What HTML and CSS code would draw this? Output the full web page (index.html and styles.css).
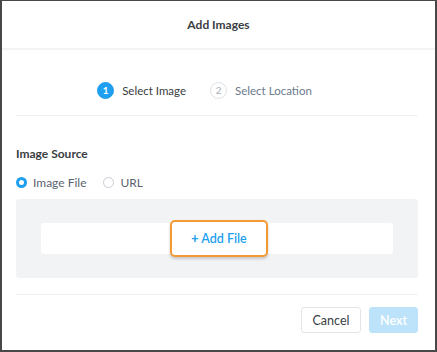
FILE: index.html
```html
<!DOCTYPE html>
<html lang="en">
<head>
    <meta charset="UTF-8">
    <title>Add Images</title>
    <link rel="stylesheet" href="styles.css">
</head>
<body>
    <div class="dialog">
        <div class="dialog-header">Add Images</div>
        <div class="dialog-body">
            <div class="steps">
                <div class="step active"><span class="step-num">1</span>Select Image</div>
                <div class="step"><span class="step-num">2</span>Select Location</div>
            </div>
            <div class="section-title">Image Source</div>
            <div class="radios">
                <label class="radio checked"><span class="radio-dot"></span>Image File</label>
                <label class="radio"><span class="radio-dot"></span>URL</label>
            </div>
            <div class="drop-area">
                <div class="drop-bar">
                    <button class="add-file"><span class="plus">+</span> Add File</button>
                </div>
            </div>
        </div>
        <div class="dialog-footer">
            <button class="btn">Cancel</button>
            <button class="btn btn-primary" disabled>Next</button>
        </div>
    </div>
</body>
</html>
```

FILE: styles.css
```css
body {
    margin: 0;
    font-family: Lato, "Open Sans", sans-serif;
    background: #fff;
}
.dialog {
    box-sizing: border-box;
    width: 437px;
    height: 352px;
    border: 2px solid #484848;
    border-top-width: 1px;
    background: #fff;
    display: flex;
    flex-direction: column;
}
.dialog-header {
    height: 47px;
    display: flex;
    align-items: center;
    justify-content: center;
    font-size: 12px;
    font-weight: 700;
    color: #3a3d42;
    border-bottom: 2px solid #f3f4f6;
}
.dialog-body {
    padding: 0 17px 0 14px;
}
.steps {
    display: flex;
    justify-content: center;
    gap: 24px;
    height: 66px;
    box-sizing: border-box;
    padding: 32px 25px 0 0;
    border-bottom: 1px solid #f0f1f3;
}
.step {
    display: flex;
    align-items: flex-start;
    font-size: 11.5px;
    color: #6b7a8d;
    line-height: 17px;
}
.step.active {
    color: #3a3d42;
}
.step-num {
    box-sizing: border-box;
    width: 17px;
    height: 17px;
    border-radius: 50%;
    border: 1px solid #dde1e6;
    color: #a4adb8;
    font-size: 10px;
    display: flex;
    align-items: center;
    justify-content: center;
    margin-right: 8px;
}
.step.active .step-num {
    background: #1e9ff0;
    border-color: #1e9ff0;
    color: #fff;
    font-weight: 700;
}
.section-title {
    margin-top: 30px;
    font-size: 12px;
    font-weight: 700;
    color: #3a3d42;
}
.radios {
    display: flex;
    gap: 17px;
    margin-top: 14px;
}
.radio {
    display: flex;
    align-items: center;
    font-size: 12px;
    color: #5b6470;
}
.radio-dot {
    box-sizing: border-box;
    width: 11px;
    height: 11px;
    border-radius: 50%;
    border: 1px solid #c8cdd3;
    margin-right: 6px;
}
.radio.checked .radio-dot {
    border: 3px solid #1e9ff0;
}
.drop-area {
    margin-top: 9px;
    background: #f2f3f5;
    border-radius: 3px;
    height: 79px;
    padding: 24px 25px 0;
    box-sizing: border-box;
}
.drop-bar {
    background: #fff;
    border-radius: 3px;
    height: 31px;
    display: flex;
    justify-content: center;
    align-items: center;
}
.add-file {
    box-sizing: border-box;
    width: 98px;
    height: 37px;
    margin-left: 4px;
    border: 2px solid #f39a35;
    border-radius: 5px;
    background: #fff;
    box-shadow: 0 2px 3px rgba(0, 0, 0, 0.18);
    color: #1e9ff0;
    font-family: inherit;
    font-size: 12.5px;
    font-weight: 600;
}
.add-file .plus {
    font-weight: 900;
}
.dialog-footer {
    margin: 16px 17px 0 14px;
    border-top: 1px solid #f0f1f3;
    padding-top: 12px;
    display: flex;
    justify-content: flex-end;
    gap: 8px;
}
.btn {
    height: 26px;
    width: 60px;
    padding: 0;
    border: 1px solid #e1e4e8;
    border-radius: 3px;
    background: #fff;
    color: #3a3d42;
    font-family: inherit;
    font-size: 12.5px;
}
.btn-primary {
    width: 49px;
    border-color: #bde3fb;
    background: #bde3fb;
    color: #fff;
    font-weight: 600;
}
```
